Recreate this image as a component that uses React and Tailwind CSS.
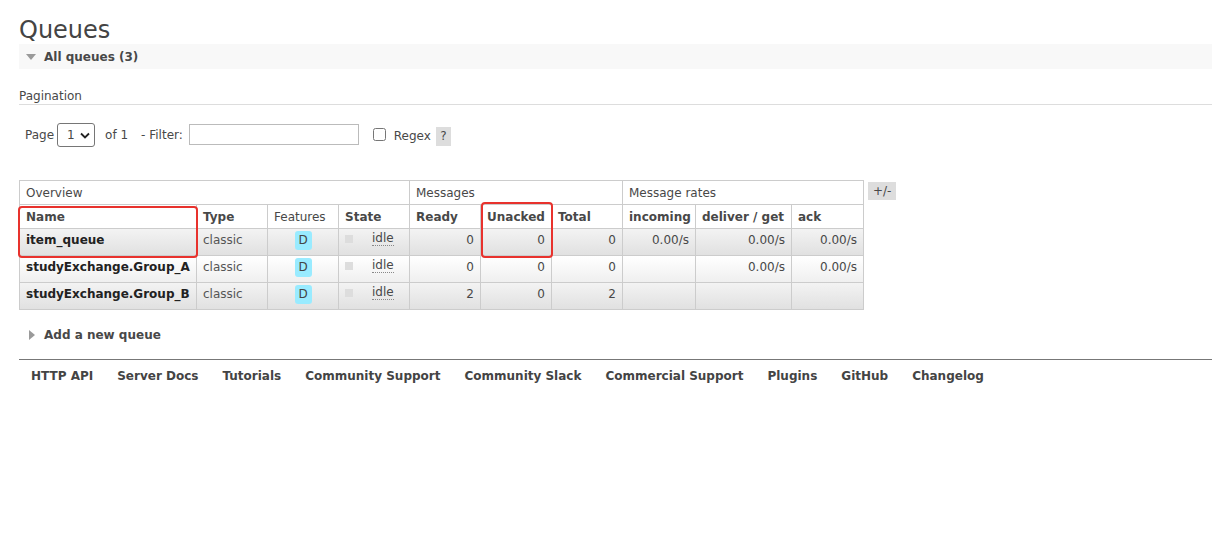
import React from 'react';

const font = { fontFamily: '"DejaVu Sans", Verdana, sans-serif' };

const rows = [
  { name: 'item_queue', ready: '0', unacked: '0', total: '0', incoming: '0.00/s', deliver: '0.00/s', ack: '0.00/s', alt: true },
  { name: 'studyExchange.Group_A', ready: '0', unacked: '0', total: '0', incoming: '', deliver: '0.00/s', ack: '0.00/s', alt: false },
  { name: 'studyExchange.Group_B', ready: '2', unacked: '0', total: '2', incoming: '', deliver: '', ack: '', alt: true },
];

const footerLinks = ['HTTP API', 'Server Docs', 'Tutorials', 'Community Support', 'Community Slack', 'Commercial Support', 'Plugins', 'GitHub', 'Changelog'];

function Cell({ children, className = '' }) {
  return <td className={`border border-[#cccccc] px-[6px] pt-[2px] pb-0 align-top overflow-hidden whitespace-nowrap ${className}`}>{children}</td>;
}

function Head({ children, bold = true, className = '' }) {
  return <th className={`border border-[#cccccc] px-[6px] h-[24px] text-left align-middle whitespace-nowrap overflow-hidden ${bold ? 'font-bold' : 'font-normal'} ${className}`}>{children}</th>;
}

export default function App() {
  return (
    <div className="bg-white min-h-[542px] w-[1212px] pl-[19px] text-[12px] text-[#484848]" style={font}>
      <h1 className="pt-[16px] text-[24px] leading-[28px] text-[#444444]">Queues</h1>

      <div className="h-[25px] bg-[#f8f8f8] flex items-center">
        <span className="ml-[7px] w-0 h-0 border-l-[5px] border-r-[5px] border-t-[6px] border-l-transparent border-r-transparent border-t-[#9a9a9a]" />
        <span className="ml-[8px] text-[12px] font-bold text-[#484848]">All queues (3)</span>
      </div>

      <div className="mt-[20px] pb-[1px] border-b border-[#dddddd] text-[12px] leading-[14px]">Pagination</div>

      <div className="mt-[17px] flex items-center h-[25px] pl-[6px]">
        <span>Page</span>
        <div className="relative ml-[3px]">
          <select className="appearance-none w-[38px] h-[24px] border border-[#767676] rounded-[3px] pl-[9px] text-[12px] bg-white" style={font} defaultValue="1">
            <option value="1">1</option>
          </select>
          <svg className="absolute right-[5px] top-[9px] pointer-events-none" width="10" height="7" viewBox="0 0 10 7">
            <path d="M1 1.5 L5 5.5 L9 1.5" fill="none" stroke="#222" strokeWidth="1.8" />
          </svg>
        </div>
        <span className="ml-[10px]">of 1</span>
        <span className="ml-[13px]">- Filter:</span>
        <input className="ml-[6px] w-[170px] h-[21px] border border-[#bbbbbb]" />
        <input type="checkbox" className="ml-[14px] w-[13px] h-[13px]" />
        <span className="ml-[8px] mt-[2px]">Regex</span>
        <span className="ml-[5px] mt-[3px] w-[15px] h-[19px] bg-[#dddddd] flex items-center justify-center">?</span>
      </div>

      <div className="mt-[33px] flex items-start">
        <div className="relative">
          <table className="border-collapse table-fixed w-[845px] text-[12px]">
            <colgroup>
              <col className="w-[177px]" />
              <col className="w-[71px]" />
              <col className="w-[71px]" />
              <col className="w-[71px]" />
              <col className="w-[71px]" />
              <col className="w-[71px]" />
              <col className="w-[71px]" />
              <col className="w-[73px]" />
              <col className="w-[96px]" />
              <col className="w-[72px]" />
            </colgroup>
            <thead>
              <tr>
                <th colSpan={4} className="border border-[#cccccc] px-[6px] h-[24px] text-left font-normal">Overview</th>
                <th colSpan={3} className="border border-[#cccccc] px-[6px] h-[24px] text-left font-normal">Messages</th>
                <th colSpan={3} className="border border-[#cccccc] px-[6px] h-[24px] text-left font-normal">Message rates</th>
              </tr>
              <tr>
                <Head>Name</Head>
                <Head>Type</Head>
                <Head bold={false}>Features</Head>
                <Head>State</Head>
                <Head>Ready</Head>
                <Head>Unacked</Head>
                <Head>Total</Head>
                <Head>incoming</Head>
                <Head>deliver / get</Head>
                <Head>ack</Head>
              </tr>
            </thead>
            <tbody>
              {rows.map((r) => (
                <tr key={r.name} className={`h-[27px] bg-gradient-to-b ${r.alt ? 'from-[#f3f3f3] to-[#e0e0e0]' : 'from-[#ffffff] to-[#efefef]'}`}>
                  <Cell className="font-bold text-[#222222]">{r.name}</Cell>
                  <Cell className="text-[#555555]">classic</Cell>
                  <Cell className="text-center !pt-[2px]">
                    <span className="inline-block align-top w-[17px] h-[19px] leading-[19px] rounded-[3px] bg-[#99ebff] text-[#444444]">D</span>
                  </Cell>
                  <Cell>
                    <div className="flex items-start">
                      <span className="mt-[4px] w-[8px] h-[8px] bg-[#dddddd]" />
                      <span className="ml-[19px] border-b border-dotted border-[#888888] leading-[14px]">idle</span>
                    </div>
                  </Cell>
                  <Cell className="text-right">{r.ready}</Cell>
                  <Cell className="text-right">{r.unacked}</Cell>
                  <Cell className="text-right">{r.total}</Cell>
                  <Cell className="text-right">{r.incoming}</Cell>
                  <Cell className="text-right">{r.deliver}</Cell>
                  <Cell className="text-right">{r.ack}</Cell>
                </tr>
              ))}
            </tbody>
          </table>
          <div className="absolute left-[-1px] top-[26px] w-[180px] h-[52px] border-2 border-[#e8322d] rounded-[4px] pointer-events-none" />
          <div className="absolute left-[462px] top-[22px] w-[72px] h-[56px] border-2 border-[#e8322d] rounded-[4px] pointer-events-none" />
        </div>
        <span className="ml-[4px] mt-[2px] px-[5px] h-[18px] leading-[18px] bg-[#dddddd] text-[#484848]">+/-</span>
      </div>

      <div className="mt-[18px] flex items-center h-[14px]">
        <span className="ml-[10px] w-0 h-0 border-t-[5px] border-b-[5px] border-l-[6px] border-t-transparent border-b-transparent border-l-[#9a9a9a]" />
        <span className="ml-[9px] text-[12px] font-bold text-[#484848]">Add a new queue</span>
      </div>

      <div className="mt-[17px] border-t border-[#777777]" />

      <div className="mt-[7px] flex pl-[12px] gap-[24px] text-[12px] font-bold text-[#444444]">
        {footerLinks.map((l) => (
          <span key={l}>{l}</span>
        ))}
      </div>
    </div>
  );
}
